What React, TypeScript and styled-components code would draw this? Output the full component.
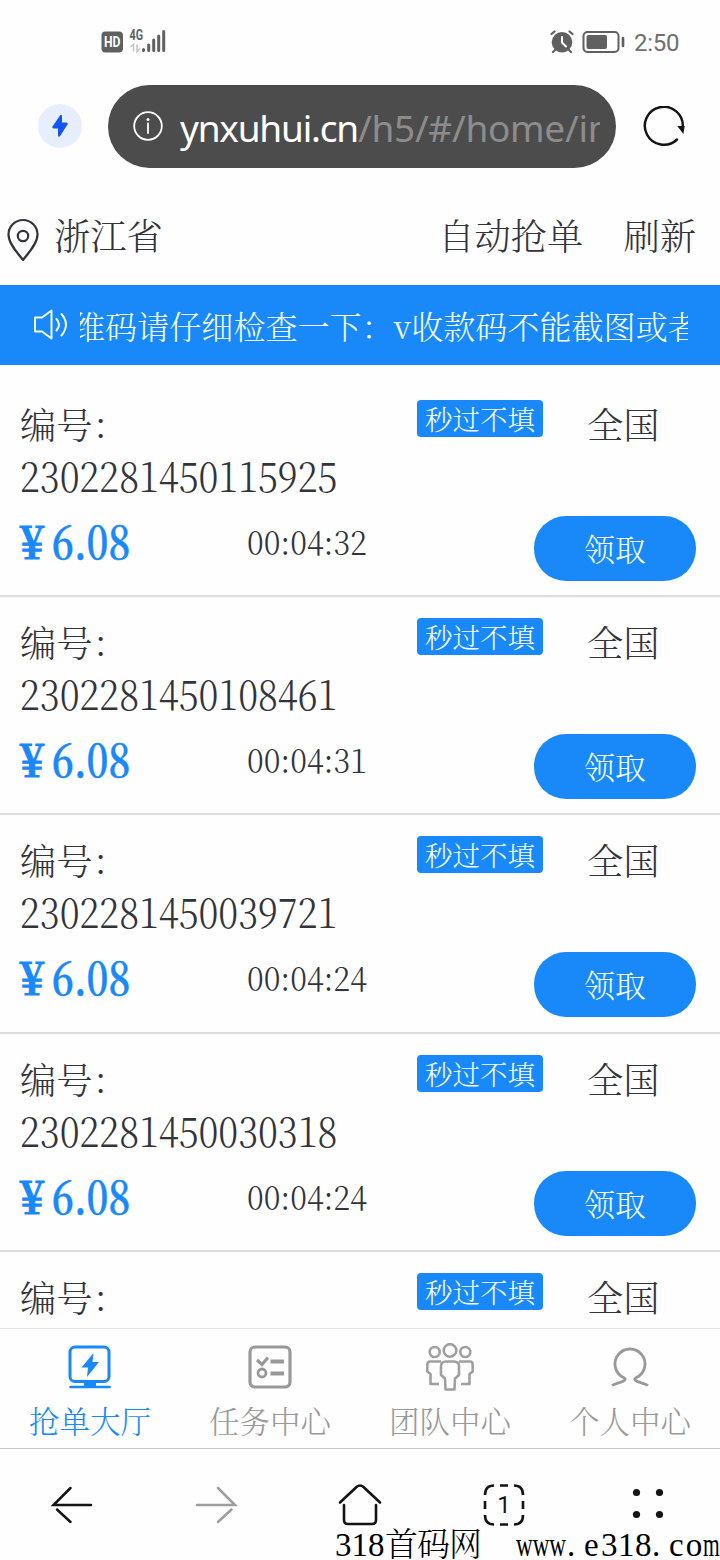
import React from "react";
import styled, { createGlobalStyle } from "styled-components";

const blue = "#1989fa";
const ink = "#33343b";
const serif = `"Noto Serif CJK SC", "Noto Sans CJK SC", "Liberation Serif", serif`;

const GlobalStyle = createGlobalStyle`
  * { box-sizing: border-box; }
  body {
    margin: 0;
    background: #fefefe;
    color: ${ink};
    font-family: ${serif};
    font-weight: 300;
  }
`;

const Screen = styled.div`
  position: relative;
  display: flex;
  flex-direction: column;
  width: 720px;
  height: 1560px;
  overflow: hidden;
  background: #fefefe;
`;

const StatusBar = styled.header`
  display: flex;
  align-items: flex-start;
  justify-content: space-between;
  flex: none;
  height: 85px;
  padding: 28px 40px 0 101px;
`;

const StatusGroup = styled.div`
  display: flex;
  align-items: center;
  height: 28px;
`;

const Clock = styled.span`
  margin-left: 9px;
  width: 46px;
  color: #707070;
  font: 400 24px/28px Roboto, sans-serif;
  letter-spacing: -0.3px;
  white-space: nowrap;
  padding-top: 2px;
`;

const AddressBar = styled.div`
  display: flex;
  align-items: center;
  flex: none;
  height: 83px;
  padding: 0 34px 0 38px;
`;

const Flash = styled.div`
  display: grid;
  place-items: center;
  width: 44px;
  height: 44px;
  margin: -1px 26px 0 0;
  border-radius: 50%;
  background: #e6eeff;
`;

const UrlPill = styled.div`
  display: flex;
  align-items: center;
  width: 508px;
  height: 83px;
  padding: 0 16px 0 25px;
  margin-right: 27px;
  border-radius: 42px;
  background: #4c4c4c;

  svg { margin-top: -2px; }
`;

const Url = styled.div`
  flex: 1;
  margin-left: 17px;
  overflow: hidden;
  white-space: nowrap;
  color: #8c8c8c;
  font: 400 37px/60px "Noto Sans", sans-serif;
  letter-spacing: -0.3px;
  padding-top: 3px;
`;

const Host = styled.span`
  color: #fff;
  letter-spacing: -1.2px;
`;

const LocationBar = styled.div`
  display: flex;
  align-items: center;
  flex: none;
  height: 117px;
  padding: 15px 24px 0 6px;
  font-size: 36.3px;
  line-height: 52px;
`;

const Province = styled.span`
  flex: 1;
  margin-left: 14px;
`;

const Action = styled.span`
  margin-left: 40px;
`;

const Pin = styled.svg`
  margin-top: 12px;
`;

const Notice = styled.div`
  display: flex;
  align-items: center;
  flex: none;
  height: 80px;
  padding: 0 32px;
  background: ${blue};
  color: #f2fdff;
`;

const Marquee = styled.div`
  display: flex;
  width: 608px;
  margin-left: 12px;
  overflow: hidden;
  font-size: 32.1px;
  line-height: 48px;
  white-space: nowrap;
`;

const MarqueeText = styled.span`
  margin-left: -7px;
`;

const OrderList = styled.main`
  flex: none;
  height: 963px;
  padding-top: 13px;
  overflow: hidden;
`;

const Card = styled.article`
  height: 218.2px;
  padding: 22px 24px 0 20px;
  border-bottom: 1px solid #dcdcdc;
  box-shadow: 0 1px 1px rgba(0, 0, 0, 0.12);
`;

const CardTop = styled.div`
  display: flex;
  align-items: flex-start;
  height: 116px;
`;

const Serial = styled.div`
  width: 397px;
  font-size: 36.3px;
  line-height: 46px;
`;

/* Figures are set taller and narrower than the surrounding text. */
const Figures = styled.span<{ $scale: number }>`
  display: inline-block;
  transform: scaleX(${(p) => p.$scale});
  transform-origin: left;
`;

const SerialNumber = styled.div`
  margin-top: 2px;
  font-size: 42px;
  line-height: 53px;
`;

const Tag = styled.span`
  width: 126px;
  height: 37px;
  border-radius: 4px;
  background: ${blue};
  color: #f2fdff;
  font-size: 27.5px;
  line-height: 37px;
  text-align: center;
`;

const Region = styled.span`
  margin-left: 44px;
  font-size: 36.3px;
  line-height: 46px;
`;

const CardBottom = styled.div`
  display: flex;
  align-items: center;
  height: 65px;
`;

const Price = styled.div`
  display: flex;
  width: 227px;
  padding-bottom: 19px;
  color: ${blue};
  font-size: 46px;
  font-weight: 600;
  line-height: 46px;
  -webkit-text-stroke: 0.5px ${blue};
`;

const Yen = styled.span`
  width: 32px;
  font-weight: 700;
  transform: scaleX(0.88);
  transform-origin: left;
  -webkit-text-stroke: 1.2px ${blue};
`;

const Countdown = styled.div`
  flex: 1;
  padding-bottom: 15px;
  font-size: 34px;
  line-height: 50px;
`;

const ClaimButton = styled.button`
  width: 162px;
  height: 65px;
  border: 0;
  border-radius: 32px;
  padding: 0;
  background: ${blue};
  color: #f2fdff;
  font: 300 30.8px/65px ${serif};
`;

const TabBar = styled.nav`
  display: grid;
  grid-template-columns: repeat(4, 1fr);
  flex: none;
  height: 120px;
  border-top: 1px solid #e2e2e2;
`;

const Tab = styled.div<{ $active?: boolean }>`
  display: flex;
  flex-direction: column;
  align-items: center;
  padding-top: 14px;
  color: ${(p) => (p.$active ? blue : "#999")};
  font-size: 30.5px;
  line-height: 44px;

  svg { margin-bottom: 7px; }
`;

const BrowserBar = styled.footer`
  display: grid;
  grid-template-columns: repeat(5, 1fr);
  justify-items: center;
  flex: none;
  height: 112px;
  padding-top: 32px;
  border-top: 1px solid #c6c6c6;
`;

const Watermark = styled.div`
  position: absolute;
  left: 335px;
  top: 1526px;
  display: flex;
  color: #000;
  font-family: "Liberation Serif", ${serif};
  font-size: 33px;
  line-height: 34px;
  padding-top: 2px;
  white-space: pre;
`;

const Piece = styled.span<{ $width: number; $squeeze?: number; $gap?: number }>`
  flex: none;
  width: ${(p) => p.$width}px;
  letter-spacing: ${(p) => p.$gap ?? 0}px;
  transform: scaleX(${(p) => p.$squeeze ?? 1});
  transform-origin: left;
`;

type Order = { label: string; id?: string; time?: string };

const label = "编号\uff1a";
const orders: Order[] = [
  { label, id: "2302281450115925", time: "00:04:32" },
  { label, id: "2302281450108461", time: "00:04:31" },
  { label, id: "2302281450039721", time: "00:04:24" },
  { label, id: "2302281450030318", time: "00:04:24" },
  { label },
];

const SignalIcons = () => (
  <svg width="66" height="28" viewBox="0 0 66 28">
    <rect x="0.500" y="3.500" width="21.500" height="21" rx="4" fill="#606060" />
    <text x="3" y="19" fontFamily="Roboto, sans-serif" fontSize="14" fontWeight="700" fill="#fff" textLength="16.500" lengthAdjust="spacingAndGlyphs">HD</text>
    <text x="28.500" y="12.300" fontFamily="Roboto, sans-serif" fontSize="14" fontWeight="700" fill="#606060" textLength="13.500" lengthAdjust="spacingAndGlyphs">4G</text>
    <path d="M29.500 19l3-2.500v7M36 16.500v7l3-3" fill="none" stroke="#c6c6c6" strokeWidth="1.600" />
    <g stroke="#606060" strokeWidth="3" strokeLinecap="round">
      <path d="M42.500 21.500v1M47.700 17v5.500M52.700 12v10.500M57.700 8v14.500M62.700 3.500v19" />
    </g>
  </svg>
);

const AlarmIcon = () => (
  <svg width="24" height="24" viewBox="0 0 24 24">
    <circle cx="12" cy="12.300" r="10.300" fill="#606060" />
    <path d="M1.500 4l3-2.500M22.500 4l-3-2.500M5 20l-2 2M19 20l2 2" stroke="#606060" strokeWidth="2.200" strokeLinecap="round" />
    <path d="M12 7v5.500l4 4" fill="none" stroke="#fff" strokeWidth="2" strokeLinecap="round" />
  </svg>
);

const Battery = styled.svg`
  margin-left: 8px;
`;

const BatteryIcon = () => (
  <Battery width="43" height="24" viewBox="0 0 43 24">
    <rect x="1.500" y="2" width="35" height="20" rx="4" fill="none" stroke="#606060" strokeWidth="2" />
    <rect x="4.500" y="5" width="20.500" height="14" rx="2" fill="#606060" />
    <path d="M41 8v8" stroke="#606060" strokeWidth="2.600" strokeLinecap="round" />
  </Battery>
);

const HallIcon = () => (
  <svg width="48" height="48" viewBox="0 0 48 48" fill="none" stroke={blue} strokeWidth="3">
    <rect x="4" y="4" width="39" height="34.500" rx="5" />
    <path d="M18 38h12v6H18z" fill={blue} stroke="none" />
    <path d="M4.500 44h39" strokeLinecap="round" strokeWidth="2.600" />
    <path d="M27.500 10L15.500 24.500h6.500L21 34l12-15h-6.500z" fill={blue} stroke="none" />
  </svg>
);

const TaskIcon = () => (
  <svg width="48" height="48" viewBox="0 0 48 48" fill="none" stroke="#999" strokeWidth="3.200">
    <rect x="4" y="4" width="40" height="40" rx="5" />
    <path d="M11 17l5 4.500 6-7" />
    <circle cx="16" cy="30" r="4" strokeWidth="2.800" />
    <path d="M24.500 18.500H38M24.500 30.500H38" strokeWidth="3.800" />
  </svg>
);

const TeamIcon = () => (
  <svg width="48" height="48" viewBox="0 0 48 48" fill="none" stroke="#a0a0a0" strokeWidth="2.600" strokeLinejoin="round">
    <circle cx="8.700" cy="9" r="5" />
    <circle cx="24" cy="7.500" r="6.300" />
    <circle cx="39.300" cy="9" r="5" />
    <path d="M15 18.500H4Q1.300 18.500 1.300 22v6.500l3.200 2.500v10H13" />
    <path d="M33 18.500h11q2.700 0 2.700 3.500v6.500L43.500 31v10H35" />
    <path d="M20 18.500h8q5 0 5 5V32l-4 3.500-.5 11h-9l-.5-11L15 32v-8.500q0-5 5-5z" />
  </svg>
);

const UserIcon = () => (
  <svg width="48" height="48" viewBox="0 0 48 48" fill="none" stroke="#999" strokeWidth="2.800" strokeLinejoin="round">
    <path d="M6 42.500c4-3 10-2.500 13-5.500.8-1-.5-1.800-1.500-2.500A15 15 0 1 1 30.500 34.500c-1 .7-2.300 1.500-1.500 2.500 3 3 9 2.500 13 5.500" />
  </svg>
);

export default function App() {
  return (
    <>
      <GlobalStyle />
      <Screen>
        <StatusBar>
          <StatusGroup><SignalIcons /></StatusGroup>
          <StatusGroup>
            <AlarmIcon />
            <BatteryIcon />
            <Clock>2:50</Clock>
          </StatusGroup>
        </StatusBar>

        <AddressBar>
          <Flash>
            <svg width="18" height="24" viewBox="0 0 18 24">
              <path d="M9 1.500Q10.500 0 11 2v6.500h4.500q2 .3 1 2L9.500 21.500Q7.500 24 7 21.500V14.500H2.500q-2-.5-1-2z" fill="#1257f5" />
            </svg>
          </Flash>
          <UrlPill>
            <svg width="30" height="30" viewBox="0 0 30 30" fill="none" stroke="#fff" strokeWidth="1.800" strokeLinecap="round">
              <circle cx="15" cy="15" r="13.800" />
              <path d="M15 12.500v9.500" />
              <circle cx="15" cy="8.500" r="1.500" fill="#fff" stroke="none" />
            </svg>
            <Url><Host>ynxuhui.cn</Host>/h5/#/home/in</Url>
          </UrlPill>
          <svg width="42" height="42" viewBox="0 0 42 42" fill="none" stroke="#141414" strokeWidth="2.500" strokeLinecap="round">
            <path d="M34 33.500A19 19 0 1 1 39.800 21" />
            <path d="M35.500 20.500h5.500l-1 6z" fill="#141414" stroke="#141414" strokeWidth="1.200" />
          </svg>
        </AddressBar>

        <LocationBar>
          <Pin width="34" height="44" viewBox="0 0 34 44" fill="none" stroke={ink} strokeWidth="2.200">
            <path d="M17 42C12 35.500 2.500 26 2.500 16.500a14.500 14.500 0 0 1 29 0C31.500 26 22 35.500 17 42z" strokeLinejoin="round" />
            <circle cx="17" cy="18" r="5.200" />
          </Pin>
          <Province>浙江省</Province>
          <Action>自动抢单</Action>
          <Action>刷新</Action>
        </LocationBar>

        <Notice>
          <svg width="36" height="34" viewBox="0 0 36 34" fill="none" stroke="#f2fdff" strokeWidth="2" strokeLinecap="round" strokeLinejoin="round">
            <path d="M3 9.500h7L19.500 2.500v28L10 23.500H3z" />
            <path d="M24.500 11q5 5.500 0 11.500M29.500 6q9 10.500 0 21.500" />
          </svg>
          <Marquee><MarqueeText>{"维码请仔细检查一下\uff1av收款码不能截图或者"}</MarqueeText></Marquee>
        </Notice>

        <OrderList>
          {orders.map((o, i) => (
            <Card key={i}>
              <CardTop>
                <Serial>
                  {o.label}
                  {o.id && <SerialNumber><Figures $scale={0.873}>{o.id}</Figures></SerialNumber>}
                </Serial>
                <Tag>秒过不填</Tag>
                <Region>全国</Region>
              </CardTop>
              {o.time && (
                <CardBottom>
                  <Price><Yen>¥</Yen><Figures $scale={0.83}>6.08</Figures></Price>
                  <Countdown><Figures $scale={0.905}>{o.time}</Figures></Countdown>
                  <ClaimButton>领取</ClaimButton>
                </CardBottom>
              )}
            </Card>
          ))}
        </OrderList>

        <TabBar>
          <Tab $active><HallIcon />抢单大厅</Tab>
          <Tab><TaskIcon />任务中心</Tab>
          <Tab><TeamIcon />团队中心</Tab>
          <Tab><UserIcon />个人中心</Tab>
        </TabBar>

        <BrowserBar>
          <svg width="48" height="48" viewBox="0 0 48 48" fill="none" stroke="#141414" strokeWidth="2.500" strokeLinecap="round">
            <path d="M22.500 7L5.500 24H43M9 28.500L22.500 41" />
          </svg>
          <svg width="48" height="48" viewBox="0 0 48 48" fill="none" stroke="#9d9d9d" strokeWidth="2.500" strokeLinecap="round">
            <path d="M26 7l17 17H5M39.500 28.500L26 41" />
          </svg>
          <svg width="48" height="48" viewBox="0 0 48 48" fill="none" stroke="#141414" strokeWidth="2.600" strokeLinecap="round" strokeLinejoin="round">
            <path d="M4 21.500L20.500 6q3.500-3 7 0L44 21.500" />
            <path d="M8 24v15q0 4 4 4h24q4 0 4-4V24" />
          </svg>
          <svg width="48" height="48" viewBox="0 0 48 48" fill="none" stroke="#141414" strokeWidth="2.600">
            <path d="M5 14q0-9.500 9-9.500M34 4.500q9 0 9 9.500M43 34q0 9.500-9 9.500M14 43.500q-9 0-9-9.500M20 4.500h8M20 43.500h8M5 20v8M43 20v8" />
            <text x="24" y="32" textAnchor="middle" fontFamily="Roboto, sans-serif" fontSize="24" fontWeight="400" fill="#141414" stroke="none">1</text>
          </svg>
          <svg width="48" height="48" viewBox="0 0 48 48" fill="#141414">
            <circle cx="12.500" cy="11.500" r="3.600" />
            <circle cx="35.500" cy="11.500" r="3.600" />
            <circle cx="12.500" cy="33.500" r="3.600" />
            <circle cx="35.500" cy="33.500" r="3.600" />
          </svg>
        </BrowserBar>

        <Watermark>
          <Piece $width={50}>318</Piece>
          <Piece $width={131} $gap={-1}>首码网</Piece>
          <Piece $width={51} $squeeze={0.7}>www</Piece>
          <Piece $width={17}>.</Piece>
          <Piece $width={17}>e</Piece>
          <Piece $width={51} $gap={0.5}>318</Piece>
          <Piece $width={17}>.</Piece>
          <Piece $width={34} $gap={2}>co</Piece>
          <Piece $width={17} $squeeze={0.65}>m</Piece>
        </Watermark>
      </Screen>
    </>
  );
}
